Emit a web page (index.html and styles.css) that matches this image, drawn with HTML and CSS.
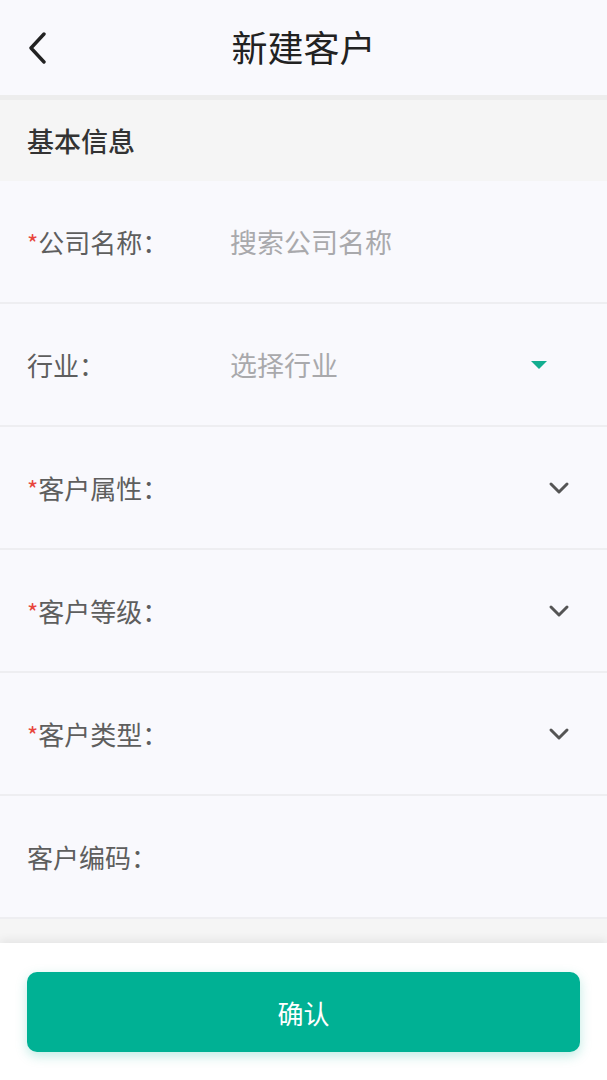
FILE: index.html
```html
<!DOCTYPE html>
<html lang="zh-CN">
<head>
    <meta charset="utf-8">
    <link rel="stylesheet" href="styles.css">
    <title>新建客户</title>
</head>
<body>
    <div class="page">
        <div class="header">
            <div class="back">
                <svg width="22" height="32" viewBox="0 0 22 32"><path d="M18 2 L5 16 L18 30" fill="none" stroke="#222" stroke-width="3.4" stroke-linecap="round" stroke-linejoin="round"/></svg>
            </div>
            <h1>新建客户</h1>
            <div></div>
        </div>
        <div class="line"></div>
        <div class="section">基本信息</div>

        <div class="form">
            <div class="row">
                <div class="label"><span class="star">*</span>公司名称：</div>
                <div class="value placeholder">搜索公司名称</div>
            </div>
            <div class="row">
                <div class="label">行业：</div>
                <div class="value placeholder">选择行业</div>
                <svg class="tri" width="16" height="8" viewBox="0 0 16 8"><path d="M0 0 H16 L8 8 Z" fill="#13ae90"/></svg>
            </div>
            <div class="row">
                <div class="label"><span class="star">*</span>客户属性：</div>
                <div class="value"></div>
                <svg class="arrow" width="22" height="14" viewBox="0 0 22 14"><path d="M3 3 L11 11 L19 3" fill="none" stroke="#555" stroke-width="3" stroke-linecap="round" stroke-linejoin="round"/></svg>
            </div>
            <div class="row">
                <div class="label"><span class="star">*</span>客户等级：</div>
                <div class="value"></div>
                <svg class="arrow" width="22" height="14" viewBox="0 0 22 14"><path d="M3 3 L11 11 L19 3" fill="none" stroke="#555" stroke-width="3" stroke-linecap="round" stroke-linejoin="round"/></svg>
            </div>
            <div class="row">
                <div class="label"><span class="star">*</span>客户类型：</div>
                <div class="value"></div>
                <svg class="arrow" width="22" height="14" viewBox="0 0 22 14"><path d="M3 3 L11 11 L19 3" fill="none" stroke="#555" stroke-width="3" stroke-linecap="round" stroke-linejoin="round"/></svg>
            </div>
            <div class="row">
                <div class="label">客户编码：</div>
                <div class="value"></div>
            </div>
        </div>

        <div class="rest"></div>

        <div class="footer">
            <button class="confirm">确认</button>
        </div>
    </div>
</body>
</html>
```

FILE: styles.css
```css
* {
    margin: 0;
    padding: 0;
    box-sizing: border-box;
    font-family: "Noto Sans CJK SC", "Noto Sans", sans-serif;
}
body {
    background-color: #f5f5f5;
}
.page {
    height: 1080px;
    display: flex;
    flex-direction: column;
    overflow: hidden;
}
.header {
    height: 95px;
    background-color: #f9f9fd;
    display: grid;
    grid-template-columns: 1fr auto 1fr;
    align-items: center;
    padding: 0 26px 4px 26px;
}
.back {
    display: flex;
    align-items: center;
    padding-top: 4px;
}
.header h1 {
    font-size: 36px;
    font-weight: 400;
    color: #222;
    line-height: 1;
}
.line {
    height: 5px;
    background-color: #ededed;
}
.section {
    height: 81px;
    background-color: #f5f5f5;
    font-size: 27px;
    font-weight: 500;
    color: #333;
    padding-left: 27px;
    display: flex;
    align-items: center;
}
.form {
    background-color: #f9f9fd;
}
.row {
    height: 123px;
    border-bottom: 2px solid #eeeef1;
    display: flex;
    align-items: center;
    padding: 0 37px 0 27px;
}
.label {
    width: 203px;
    font-size: 26px;
    color: #5e5e5e;
    white-space: nowrap;
}
.star {
    color: #e8453c;
    font-size: 24px;
}
.value {
    flex: 1;
    font-size: 27px;
    color: #333;
}
.placeholder {
    color: #a9a9ac;
}
.tri {
    margin-right: 23px;
}
.rest {
    flex: 1;
    background-color: #f5f5f5;
}
.footer {
    height: 137px;
    background-color: #fff;
    box-shadow: 0 -4px 8px rgba(0, 0, 0, 0.06);
    padding: 29px 27px 28px 27px;
    position: relative;
}
.confirm {
    width: 100%;
    height: 80px;
    border: 0;
    border-radius: 10px;
    background-color: #00b194;
    color: #fff;
    font-size: 26px;
    box-shadow: 0 4px 12px rgba(0, 177, 148, 0.25);
}
```
